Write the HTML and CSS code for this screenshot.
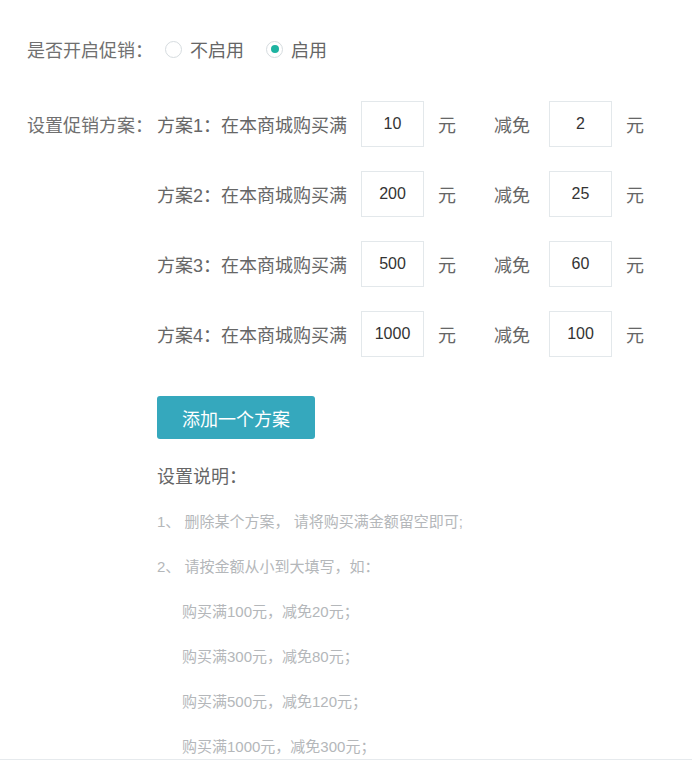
FILE: index.html
```html
<!DOCTYPE html>
<html lang="zh-CN">
<head>
    <meta charset="UTF-8">
    <meta name="viewport" content="width=device-width, initial-scale=1.0">
    <title>促销设置</title>
    <link rel="stylesheet" href="styles.css">
</head>
<body>
    <div class="container">
        <div class="row radio-row">
            <span class="label">是否开启促销：</span>
            <label class="radio"><input type="radio" name="promo" value="0"> 不启用</label>
            <label class="radio"><input type="radio" name="promo" value="1" checked> 启用</label>
        </div>

        <div class="row plan">
            <span class="label">设置促销方案：</span>
            <span class="plan-name">方案1：在本商城购买满</span>
            <input type="text" class="amount" value="10">
            <span class="unit">元</span>
            <span class="minus">减免</span>
            <input type="text" class="amount" value="2">
            <span class="unit">元</span>
        </div>
        <div class="row plan">
            <span class="label"></span>
            <span class="plan-name">方案2：在本商城购买满</span>
            <input type="text" class="amount" value="200">
            <span class="unit">元</span>
            <span class="minus">减免</span>
            <input type="text" class="amount" value="25">
            <span class="unit">元</span>
        </div>
        <div class="row plan">
            <span class="label"></span>
            <span class="plan-name">方案3：在本商城购买满</span>
            <input type="text" class="amount" value="500">
            <span class="unit">元</span>
            <span class="minus">减免</span>
            <input type="text" class="amount" value="60">
            <span class="unit">元</span>
        </div>
        <div class="row plan">
            <span class="label"></span>
            <span class="plan-name">方案4：在本商城购买满</span>
            <input type="text" class="amount" value="1000">
            <span class="unit">元</span>
            <span class="minus">减免</span>
            <input type="text" class="amount" value="100">
            <span class="unit">元</span>
        </div>

        <div class="indent">
            <button type="button" class="add-btn">添加一个方案</button>
            <div class="notes-title">设置说明：</div>
            <p class="note">1、 删除某个方案， 请将购买满金额留空即可;</p>
            <p class="note">2、 请按金额从小到大填写，如：</p>
            <p class="note sub">购买满100元，减免20元；</p>
            <p class="note sub">购买满300元，减免80元；</p>
            <p class="note sub">购买满500元，减免120元；</p>
            <p class="note sub">购买满1000元，减免300元；</p>
        </div>
    </div>
</body>
</html>
```

FILE: styles.css
```css
body {
    margin: 0;
    background: #fff;
    font-family: "Liberation Sans", "Noto Sans CJK TC", "Noto Sans CJK SC", sans-serif;
    color: #666;
}

.container {
    padding: 26px 0 0 27px;
    border-bottom: 1px solid #e6eaed;
}

.row {
    display: flex;
    align-items: center;
    height: 46px;
    font-size: 18px;
}

.label {
    width: 130px;
    flex-shrink: 0;
    color: #707070;
    white-space: nowrap;
}

.radio-row {
    margin-bottom: 29px;
}

.radio {
    display: flex;
    align-items: center;
    margin-left: 8px;
    margin-right: 14px;
    color: #666;
    cursor: pointer;
}

.radio input {
    appearance: none;
    -webkit-appearance: none;
    width: 17px;
    height: 17px;
    margin: 0 8px 0 0;
    border: 1px solid #d6dcdf;
    border-radius: 50%;
    position: relative;
}

.radio input:checked::after {
    content: "";
    position: absolute;
    left: 3.5px;
    top: 3.5px;
    width: 8px;
    height: 8px;
    border-radius: 50%;
    background: #1db3a1;
}

.plan {
    margin-bottom: 24px;
}

.plan-name {
    width: 204px;
    flex-shrink: 0;
    white-space: nowrap;
}

.amount {
    width: 63px;
    height: 46px;
    box-sizing: border-box;
    border: 1px solid #e3e8eb;
    text-align: center;
    font-family: "Liberation Sans", sans-serif;
    font-size: 16px;
    color: #333;
    padding: 0;
    outline: none;
}

.unit {
    margin-left: 14px;
    width: 18px;
}

.minus {
    margin-left: 38px;
    width: 55px;
}

.indent {
    padding-left: 130px;
}

.add-btn {
    margin-top: 15px;
    width: 158px;
    height: 43px;
    background: #35a8bd;
    color: #fff;
    border: none;
    border-radius: 3px;
    font-family: inherit;
    font-size: 18px;
    cursor: pointer;
}

.add-btn:hover {
    background: #2f97aa;
}

.notes-title {
    margin-top: 26px;
    line-height: 24px;
    font-size: 18px;
    color: #666;
}

.note {
    margin: 21px 0 0;
    line-height: 24px;
    font-size: 15px;
    color: #b4b7ba;
}

.note.sub {
    padding-left: 25px;
}
```
